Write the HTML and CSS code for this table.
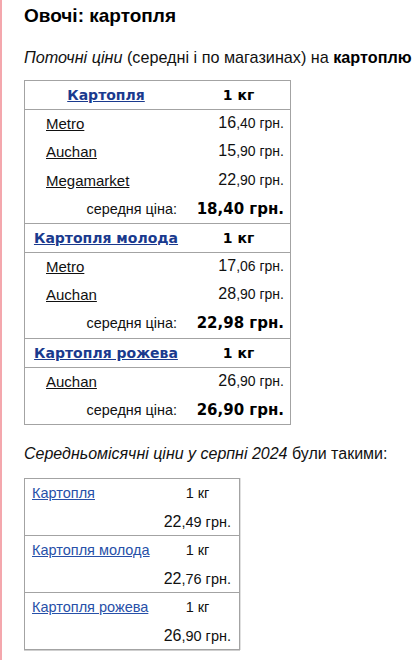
FILE: index.html
```html
<!DOCTYPE html>
<html lang="uk">
<head>
<meta charset="utf-8">
<title>Овочі: картопля</title>
<link rel="stylesheet" href="styles.css">
</head>
<body>
<div class="page">
  <h1 class="title">Овочі: картопля</h1>
  <p class="intro"><i>Поточні ціни</i> (середні і по магазинах) на <b>картоплю</b></p>

  <table class="prices">
    <tbody class="group">
      <tr class="head">
        <td class="name"><a href="#" class="prod">Картопля</a></td>
        <td class="unit">1 кг</td>
      </tr>
      <tr class="shop"><td class="store"><a href="#">Metro</a></td><td class="price"><span class="int">16</span>,40 грн.</td></tr>
      <tr class="shop"><td class="store"><a href="#">Auchan</a></td><td class="price"><span class="int">15</span>,90 грн.</td></tr>
      <tr class="shop"><td class="store"><a href="#">Megamarket</a></td><td class="price"><span class="int">22</span>,90 грн.</td></tr>
      <tr class="avg"><td class="avg-label">середня ціна:</td><td class="avg-price">18,40 грн.</td></tr>
    </tbody>
    <tbody class="group">
      <tr class="head">
        <td class="name"><a href="#" class="prod">Картопля молода</a></td>
        <td class="unit">1 кг</td>
      </tr>
      <tr class="shop"><td class="store"><a href="#">Metro</a></td><td class="price"><span class="int">17</span>,06 грн.</td></tr>
      <tr class="shop"><td class="store"><a href="#">Auchan</a></td><td class="price"><span class="int">28</span>,90 грн.</td></tr>
      <tr class="avg"><td class="avg-label">середня ціна:</td><td class="avg-price">22,98 грн.</td></tr>
    </tbody>
    <tbody class="group">
      <tr class="head">
        <td class="name"><a href="#" class="prod">Картопля рожева</a></td>
        <td class="unit">1 кг</td>
      </tr>
      <tr class="shop"><td class="store"><a href="#">Auchan</a></td><td class="price"><span class="int">26</span>,90 грн.</td></tr>
      <tr class="avg"><td class="avg-label">середня ціна:</td><td class="avg-price">26,90 грн.</td></tr>
    </tbody>
  </table>

  <p class="monthly"><i>Середньомісячні ціни у серпні 2024</i> були такими:</p>

  <table class="month">
    <tbody class="mgroup">
      <tr><td class="mname"><a href="#">Картопля</a></td><td class="munit">1 кг</td></tr>
      <tr><td></td><td class="mprice"><span class="int">22</span>,49 грн.</td></tr>
    </tbody>
    <tbody class="mgroup">
      <tr><td class="mname"><a href="#">Картопля молода</a></td><td class="munit">1 кг</td></tr>
      <tr><td></td><td class="mprice"><span class="int">22</span>,76 грн.</td></tr>
    </tbody>
    <tbody class="mgroup">
      <tr><td class="mname"><a href="#">Картопля рожева</a></td><td class="munit">1 кг</td></tr>
      <tr><td></td><td class="mprice"><span class="int">26</span>,90 грн.</td></tr>
    </tbody>
  </table>
</div>
</body>
</html>
```

FILE: styles.css
```css
html {
  overflow: hidden;
  background: #fff;
}

body {
  margin: 0;
  min-height: 100vh;
  border-left: 2px solid #f4a7ad;
  font-family: "Liberation Sans", Arial, sans-serif;
  color: #111;
}

.page {
  padding: 0 0 0 22px;
  width: 600px;
}

.title {
  margin: 0;
  padding-top: 5px;
  font-size: 19px;
  line-height: 22px;
  font-weight: bold;
  color: #000;
}

.intro {
  margin: 0;
  padding-top: 21px;
  font-size: 16.2px;
  line-height: 19px;
  white-space: nowrap;
}

.intro b {
  color: #000;
}

.prices {
  margin-top: 13px;
  border-collapse: collapse;
  border: 1px solid #a3a3a3;
  width: 267px;
}

.prices td {
  padding: 5px 0;
  line-height: 17px;
  vertical-align: middle;
}

.group .head td {
  border-bottom: 1px solid #a3a3a3;
}

.group + .group .head td {
  border-top: 1px solid #a3a3a3;
}

.group .shop:nth-child(even) td {
  padding-top: 4px;
  padding-bottom: 7px;
}

.group .shop:nth-child(odd) td {
  padding-top: 3px;
  padding-bottom: 7px;
}

.group .avg:nth-child(even) td {
  padding-top: 5px;
  padding-bottom: 6px;
}

.group .avg:nth-child(odd) td {
  padding-top: 5px;
  padding-bottom: 5px;
}

.name {
  width: 162px;
  text-align: center;
}

.prod {
  font-family: "DejaVu Sans", Verdana, sans-serif;
  font-weight: bold;
  font-size: 14px;
  color: #1a3a8e;
}

.unit {
  text-align: center;
  font-family: "DejaVu Sans", Verdana, sans-serif;
  font-weight: bold;
  font-size: 14px;
  color: #000;
}

.store {
  padding-left: 21px !important;
  font-size: 15px;
}

.store a {
  color: #111;
}

.price {
  text-align: right;
  padding-right: 6px !important;
  font-size: 14px;
  color: #111;
}

.int {
  font-size: 16px;
  line-height: 17px;
}

.avg-label {
  text-align: right;
  padding-right: 10px !important;
  font-size: 14.4px;
}

.avg-price {
  text-align: right;
  padding-right: 6px !important;
  font-family: "DejaVu Sans", Verdana, sans-serif;
  font-weight: bold;
  font-size: 15px;
  color: #000;
}

.monthly {
  margin: 0;
  padding-top: 19px;
  font-size: 16px;
  line-height: 19px;
}

.month {
  margin-top: 15px;
  border-collapse: collapse;
  border: 1px solid #a3a3a3;
  box-shadow: 0 1px 0 #cfcfcf, 1px 0 0 #e0e0e0;
  width: 216px;
}

.month td {
  padding: 0;
  height: 28px;
  vertical-align: middle;
  font-size: 14.5px;
}

.mgroup + .mgroup tr:first-child td {
  border-top: 1px solid #a3a3a3;
}

.mname {
  padding-left: 7px !important;
  width: 128px;
}

.mname a {
  color: #2750a8;
}

.munit {
  text-align: center;
  padding-right: 4px !important;
}

.mprice {
  text-align: right;
  padding-right: 8px !important;
}
```
